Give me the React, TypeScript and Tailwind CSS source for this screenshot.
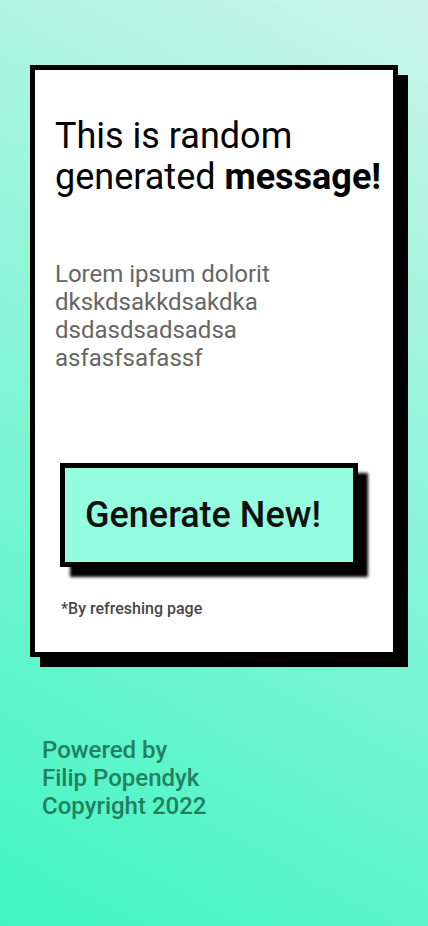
export default function App() {
  return (
    <div
      className="min-h-screen w-full bg-[linear-gradient(28deg,#40f5c3_0%,#cbf5e8_100%)] pt-[65px] pl-[30px]"
      style={{ fontFamily: "Roboto, 'Noto Sans', sans-serif" }}
    >
      <div className="w-[368px] h-[592px] border-[5px] border-black bg-white shadow-[10px_10px_0_0_#000] flex flex-col pl-5 pr-1 pt-[46px]">
        <h1 className="text-[36px] leading-[41px] text-black font-normal whitespace-nowrap">
          This is random
          <br />
          generated <span className="font-bold">message!</span>
        </h1>
        <p className="mt-[62px] text-[24px] leading-[28px] text-[#666666] w-[230px]">
          Lorem ipsum dolorit dkskdsakkdsakdka dsdasdsadsadsa asfasfsafassf
        </p>
        <button className="mt-[91px] ml-[5px] w-[298px] h-[104px] border-[5px] border-black bg-[#94fddf] shadow-[10px_10px_3px_0_#000] flex items-center pl-[20px] text-[36px] leading-none text-[#111] font-medium">
          Generate New!
        </button>
        <p className="mt-[33px] ml-[6px] text-[16px] leading-[18px] font-medium text-[#474747]">
          *By refreshing page
        </p>
      </div>
      <div className="mt-[79px] ml-[12px] text-[24px] leading-[28px] font-medium text-[#22805f]">
        <div>Powered by</div>
        <div>Filip Popendyk</div>
        <div>Copyright 2022</div>
      </div>
    </div>
  );
}
